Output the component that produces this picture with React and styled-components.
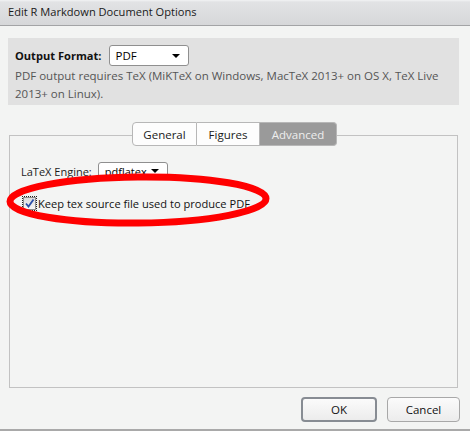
import React from 'react'
import styled, { createGlobalStyle } from 'styled-components'

const GlobalStyle = createGlobalStyle`
  html, body {
    margin: 0;
    padding: 0;
    background: #f3f4f3;
  }
  * {
    box-sizing: border-box;
  }
`

const StyledDialog = styled.div`
  display: flex;
  flex-direction: column;
  width: 470px;
  height: 431px;
  background-color: #f3f4f3;
  font-family: "Open Sans", "Noto Sans", sans-serif;
  font-size: 11.1px;
  color: #1c1c1c;
  border-bottom: 2px solid #a9a9a9;
`

const StyledTitleBar = styled.div`
  display: flex;
  align-items: center;
  height: 26px;
  padding: 0 0 2px 8px;
  background: linear-gradient(#f2f3f4 0, #e2e3e5 2px, #d6d7d9 100%);
  border-bottom: 1px solid #a3a4a6;
  font-size: 11.1px;
  color: #1a1a1a;
`

const StyledFormatPanel = styled.div`
  display: flex;
  flex-direction: column;
  margin: 12px 11px 0 8px;
  height: 67px;
  padding: 7px 7px 0 7px;
  background-color: #e1e1e1;
`

const StyledFormatRow = styled.div`
  display: flex;
  align-items: center;
  gap: 7px;
  font-size: 11.1px;
`

const StyledBoldLabel = styled.span`
  font-weight: bold;
  color: #111;
`

const StyledSelect = styled.div`
  position: relative;
  display: flex;
  align-items: center;
  width: ${props => props.width}px;
  height: ${props => props.height}px;
  padding: 0 0 0 6px;
  background-color: #fff;
  border: 1px solid #8f8f8f;
  border-radius: 3px;
  color: #000;
  font-size: ${props => props.fontSize || 11.5}px;
`

const StyledArrow = styled.span`
  position: absolute;
  right: 8px;
  top: 50%;
  margin-top: -2px;
  width: 0;
  height: 0;
  border-left: 4px solid transparent;
  border-right: 4px solid transparent;
  border-top: 4px solid #000;
`

const StyledNote = styled.p`
  margin: 1px 0 0 0;
  line-height: 18px;
  color: #555;
  font-size: 11.5px;
`

const StyledTabArea = styled.div`
  display: flex;
  flex-direction: column;
  margin: 17px 12px 0 9px;
`

const StyledTabBar = styled.div`
  position: relative;
  z-index: 1;
  display: flex;
  justify-content: center;
  margin: 0 0 -11px 0;
  padding-left: 2px;
`

const StyledTab = styled.div`
  display: flex;
  align-items: center;
  justify-content: center;
  width: ${props => props.width}px;
  height: 24px;
  font-size: 11.5px;
  color: ${props => props.active ? '#eeeeee' : '#1a1a1a'};
  background: ${props => props.active ? '#9a9a9a' : '#fdfdfd'};
  border: 1px solid #b7b7b7;
  border-left-width: ${props => props.first ? '1px' : '0'};
  border-radius: ${props => props.first ? '4px 0 0 4px' : props.last ? '0 4px 4px 0' : '0'};
`

const StyledTabPanel = styled.div`
  display: flex;
  flex-direction: column;
  height: 253px;
  padding: 26px 10px 0 10px;
  border: 1px solid #c2c2c2;
`

const StyledEngineRow = styled.div`
  display: flex;
  align-items: center;
  gap: 6px;
  padding-left: 1px;
  font-size: 11px;
`

const StyledCheckRow = styled.label`
  position: relative;
  display: flex;
  align-items: center;
  gap: 2px;
  margin: 16px 0 0 3px;
  font-size: 11.1px;
  color: #111;
`

const StyledCheckbox = styled.span`
  display: flex;
  align-items: center;
  justify-content: center;
  width: 13px;
  height: 13px;
  background: linear-gradient(#dcdcdc, #f7f7f7);
  border: 1px solid #8e8f8f;
  outline: 1px dotted #222;
  outline-offset: 0;
`

const StyledHighlight = styled.svg`
  position: absolute;
  left: -20px;
  top: -26px;
  pointer-events: none;
`

const StyledFooter = styled.div`
  display: flex;
  justify-content: flex-end;
  gap: 10px;
  margin-top: 9px;
  padding-right: 10px;
`

const StyledButton = styled.button`
  display: flex;
  align-items: center;
  justify-content: center;
  width: ${props => props.isDefault ? 76 : 73}px;
  height: 25px;
  padding: 0;
  font-family: "Open Sans", "Noto Sans", sans-serif;
  font-size: 11.5px;
  color: #111;
  background: linear-gradient(#fbfbfb, #ececec);
  border: ${props => props.isDefault ? '2px solid #878c93' : '1px solid #a8a8a8'};
  border-radius: 4px;
`

export default function App () {
  return (
    <StyledDialog>
      <GlobalStyle />
      <StyledTitleBar>Edit R Markdown Document Options</StyledTitleBar>
      <StyledFormatPanel>
        <StyledFormatRow>
          <StyledBoldLabel>Output Format:</StyledBoldLabel>
          <StyledSelect width={80} height={21}>
            PDF
            <StyledArrow />
          </StyledSelect>
        </StyledFormatRow>
        <StyledNote>
          PDF output requires TeX (MiKTeX on Windows, MacTeX 2013+ on OS X, TeX Live 2013+ on Linux).
        </StyledNote>
      </StyledFormatPanel>
      <StyledTabArea>
        <StyledTabBar>
          <StyledTab first width={65}>General</StyledTab>
          <StyledTab width={63}>Figures</StyledTab>
          <StyledTab last active width={77}>Advanced</StyledTab>
        </StyledTabBar>
        <StyledTabPanel>
          <StyledEngineRow>
            LaTeX Engine:
            <StyledSelect width={70} height={18} fontSize={11}>
              pdflatex
              <StyledArrow />
            </StyledSelect>
          </StyledEngineRow>
          <StyledCheckRow>
            <StyledCheckbox>
              <svg width="11" height="11" viewBox="0 0 11 11">
                <path d="M2 5.5 L4.5 8.5 L9.5 1.5" fill="none" stroke="#2b4fa8" strokeWidth="1.8" />
              </svg>
            </StyledCheckbox>
            Keep tex source file used to produce PDF
            <StyledHighlight width="272" height="62" viewBox="0 0 272 62">
              <ellipse cx="135" cy="30" rx="128" ry="23" fill="none" stroke="#ff0000" strokeWidth="7" transform="rotate(-0.6 135 30)" />
            </StyledHighlight>
          </StyledCheckRow>
        </StyledTabPanel>
      </StyledTabArea>
      <StyledFooter>
        <StyledButton isDefault>OK</StyledButton>
        <StyledButton>Cancel</StyledButton>
      </StyledFooter>
    </StyledDialog>
  )
}
